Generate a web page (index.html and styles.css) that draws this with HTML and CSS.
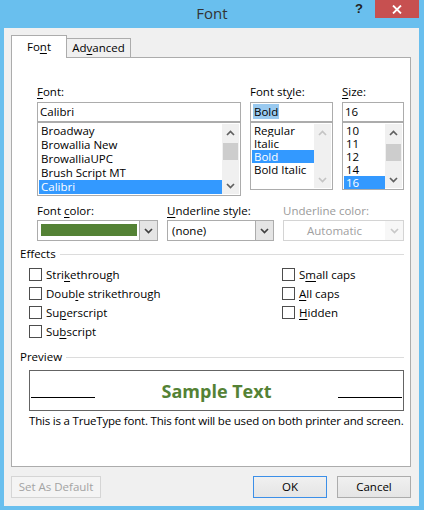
FILE: index.html
```html
<!DOCTYPE html>
<html>
<head>
<meta charset="utf-8">
<title>Font</title>
<link rel="stylesheet" href="styles.css">
</head>
<body>
<div class="window">
  <div class="titlebar">
    <span class="title">Font</span>
    <div class="controls">
      <span class="help">?</span>
      <span class="close"><svg width="10" height="9" viewBox="0 0 10 9"><path d="M1 0.5 L9 8.5 M9 0.5 L1 8.5" stroke="#fff" stroke-width="1.8" fill="none"/></svg></span>
    </div>
  </div>
  <div class="client">
    <div class="tabs">
      <div class="tab active">Fo<u>n</u>t</div>
      <div class="tab">Ad<u>v</u>anced</div>
    </div>
    <div class="panel">
      <div class="fontgrid">
        <div class="field">
          <div class="label"><u>F</u>ont:</div>
          <div class="input">Calibri</div>
          <div class="list list-font">
            <div class="items">
              <div class="item">Broadway</div>
              <div class="item">Browallia New</div>
              <div class="item">BrowalliaUPC</div>
              <div class="item">Brush Script MT</div>
              <div class="item sel">Calibri</div>
            </div>
            <div class="sbar">
              <div class="sbtn"><svg width="9" height="6" viewBox="0 0 9 6"><path d="M1 5 L4.5 1.5 L8 5" fill="none" stroke="#606060" stroke-width="1.7"/></svg></div>
              <div class="thumb t1"></div>
              <div class="sfill"></div>
              <div class="sbtn"><svg width="9" height="6" viewBox="0 0 9 6"><path d="M1 1 L4.5 4.5 L8 1" fill="none" stroke="#606060" stroke-width="1.7"/></svg></div>
            </div>
          </div>
        </div>
        <div class="field">
          <div class="label">Font st<u>y</u>le:</div>
          <div class="input"><span class="insel">Bold</span></div>
          <div class="list list-small">
            <div class="items small">
              <div class="item">Regular</div>
              <div class="item">Italic</div>
              <div class="item sel">Bold</div>
              <div class="item">Bold Italic</div>
            </div>
            <div class="sbar">
              <div class="sbtn"><svg width="9" height="6" viewBox="0 0 9 6"><path d="M1 5 L4.5 1.5 L8 5" fill="none" stroke="#c4c4c4" stroke-width="1.7"/></svg></div>
              <div class="sfill"></div>
              <div class="sbtn"><svg width="9" height="6" viewBox="0 0 9 6"><path d="M1 1 L4.5 4.5 L8 1" fill="none" stroke="#c4c4c4" stroke-width="1.7"/></svg></div>
            </div>
          </div>
        </div>
        <div class="field">
          <div class="label"><u>S</u>ize:</div>
          <div class="input">16</div>
          <div class="list list-small">
            <div class="items small">
              <div class="item">10</div>
              <div class="item">11</div>
              <div class="item">12</div>
              <div class="item">14</div>
              <div class="item sel">16</div>
            </div>
            <div class="sbar">
              <div class="sbtn"><svg width="9" height="6" viewBox="0 0 9 6"><path d="M1 5 L4.5 1.5 L8 5" fill="none" stroke="#606060" stroke-width="1.7"/></svg></div>
              <div class="thumb t2"></div>
              <div class="sfill"></div>
              <div class="sbtn"><svg width="9" height="6" viewBox="0 0 9 6"><path d="M1 1 L4.5 4.5 L8 1" fill="none" stroke="#606060" stroke-width="1.7"/></svg></div>
            </div>
          </div>
        </div>
      </div>

      <div class="colorrow">
        <div class="field">
          <div class="label">Font <u>c</u>olor:</div>
          <div class="combo">
            <div class="cval swatchwrap"><div class="swatch"></div></div>
            <div class="drop"><svg width="9" height="6" viewBox="0 0 9 6"><path d="M1 1 L4.5 4.5 L8 1" fill="none" stroke="#404040" stroke-width="1.7"/></svg></div>
          </div>
        </div>
        <div class="field">
          <div class="label"><u>U</u>nderline style:</div>
          <div class="combo">
            <div class="cval">(none)</div>
            <div class="drop"><svg width="9" height="6" viewBox="0 0 9 6"><path d="M1 1 L4.5 4.5 L8 1" fill="none" stroke="#404040" stroke-width="1.7"/></svg></div>
          </div>
        </div>
        <div class="field">
          <div class="label disabled">Underline color:</div>
          <div class="combo off">
            <div class="cval center">Automatic</div>
            <div class="drop"><svg width="9" height="6" viewBox="0 0 9 6"><path d="M1 1 L4.5 4.5 L8 1" fill="none" stroke="#c8c8c8" stroke-width="1.7"/></svg></div>
          </div>
        </div>
      </div>

      <div class="group g-effects"><span>Effects</span><div class="gline"></div></div>
      <div class="effects">
        <div class="ecol">
          <div class="check"><span class="box"></span><span>Stri<u>k</u>ethrough</span></div>
          <div class="check"><span class="box"></span><span>Doub<u>l</u>e strikethrough</span></div>
          <div class="check"><span class="box"></span><span>Su<u>p</u>erscript</span></div>
          <div class="check"><span class="box"></span><span>Su<u>b</u>script</span></div>
        </div>
        <div class="ecol">
          <div class="check"><span class="box"></span><span>S<u>m</u>all caps</span></div>
          <div class="check"><span class="box"></span><span><u>A</u>ll caps</span></div>
          <div class="check"><span class="box"></span><span><u>H</u>idden</span></div>
        </div>
      </div>

      <div class="group g-preview"><span>Preview</span><div class="gline"></div></div>
      <div class="preview">
        <div class="pline"></div>
        <div class="sample">Sample Text</div>
        <div class="pline"></div>
      </div>
      <div class="desc">This is a TrueType font. This font will be used on both printer and screen.</div>
    </div>

    <div class="buttons">
      <div class="btn btn-wide disabled-btn">Set As Default</div>
      <div class="btn btn-ok">OK</div>
      <div class="btn">Cancel</div>
    </div>
  </div>
</div>
</body>
</html>
```

FILE: styles.css
```css
* { box-sizing: border-box; }
html, body { margin: 0; padding: 0; }
body {
  font-family: "Open Sans", "Noto Sans", sans-serif;
  font-size: 11.5px;
  color: #000;
  background: #69bfee;
}
u { text-decoration: underline; text-underline-offset: 2px; text-decoration-thickness: 1px; }

.window {
  width: 424px;
  height: 510px;
  background: #69bfee;
  display: flex;
  flex-direction: column;
}

.titlebar {
  height: 28px;
  flex: none;
  display: grid;
  grid-template-columns: 1fr auto 1fr;
}
.title {
  grid-column: 2;
  font-size: 15px;
  line-height: 26px;
  color: #333;
}
.controls {
  grid-column: 3;
  justify-self: end;
  display: flex;
  align-items: flex-start;
  margin-right: 5px;
}
.help {
  font-family: "Liberation Sans", sans-serif;
  font-weight: bold;
  font-size: 13px;
  line-height: 16px;
  margin-top: 1px;
  margin-right: 12px;
  color: #222;
}
.close {
  width: 44px;
  height: 18px;
  background: #c75050;
  display: flex;
  align-items: center;
  justify-content: center;
}

.client {
  flex: 1;
  margin: 0 5px 4px 4px;
  background: #f0f0f0;
  padding: 7px 8px 8px 7px;
  display: flex;
  flex-direction: column;
}

.tabs {
  height: 22px;
  display: flex;
  align-items: flex-start;
  flex: none;
}
.tab {
  height: 19px;
  margin-top: 3px;
  width: 64px;
  border: 1px solid #acacac;
  border-left: none;
  border-bottom: none;
  background: #f0f0f0;
  text-align: center;
  line-height: 18px;
}
.tab.active {
  position: relative;
  z-index: 1;
  margin-top: 0;
  height: 23px;
  width: 56px;
  border-left: 1px solid #acacac;
  background: #fff;
  line-height: 21px;
}

.panel {
  height: 410px;
  flex: none;
  background: #fff;
  border: 1px solid #acacac;
  padding: 26px 6px 0 8px;
}

.label { line-height: 16px; margin-bottom: 2px; white-space: nowrap; }
.label.disabled { color: #9a9a9a; }
.field { display: flex; flex-direction: column; }

.fontgrid {
  margin-left: 17px;
  display: grid;
  grid-template-columns: 204px 83px 62px;
  column-gap: 9px;
}
.input {
  height: 20px;
  border: 1px solid #acacac;
  padding-left: 2px;
  line-height: 18px;
  white-space: nowrap;
}
.insel { background: #99c9ef; padding: 0 1px; }
.list {
  border: 1px solid #acacac;
  padding: 1px;
  display: flex;
}
.list-font { height: 74px; }
.list-small { height: 68px; }
.items { flex: 1; min-width: 0; }
.item {
  height: 14px;
  line-height: 14px;
  padding-left: 2px;
  white-space: nowrap;
  overflow: hidden;
}
.items.small .item { height: 13px; line-height: 13px; }
.item.sel { background: #3399ff; color: #fff; }

.sbar {
  width: 17px;
  background: #f0f0f0;
  display: flex;
  flex-direction: column;
  flex: none;
}
.sbtn {
  height: 17px;
  flex: none;
  display: flex;
  align-items: center;
  justify-content: center;
}
.sfill { flex: 1; }
.thumb { height: 17px; margin: 2px 1px 0; background: #cdcdcd; flex: none; }
.thumb.t2 { margin-top: 3px; }

.colorrow {
  margin-left: 17px;
  margin-top: 7px;
  display: grid;
  grid-template-columns: 121px 107px 121px;
  column-gap: 9px;
}
.colorrow .label { margin-bottom: 1px; }
.combo {
  height: 21px;
  border: 1px solid #acacac;
  background: #fff;
  display: flex;
}
.cval {
  flex: 1;
  line-height: 19px;
  padding-left: 4px;
  white-space: nowrap;
}
.cval.center { text-align: center; padding-left: 0; color: #a0a0a0; }
.swatchwrap { padding: 3px 2px 4px 3px; }
.swatch { height: 12px; background: #548235; }
.drop {
  width: 18px;
  border-left: 1px solid #acacac;
  background: #e5e5e5;
  display: flex;
  align-items: center;
  justify-content: center;
}
.combo.off { border-color: #d4d4d4; }
.combo.off .drop { border-left: none; background: #f7f7f7; }

.group {
  display: flex;
  align-items: center;
  gap: 4px;
  line-height: 16px;
}
.gline { flex: 1; height: 1px; background: #dcdcdc; }
.g-effects { margin-top: 5px; }
.g-preview { margin-top: 8px; }

.effects {
  margin-top: 3px;
  padding-left: 9px;
  display: grid;
  grid-template-columns: 253px 1fr;
}
.check {
  height: 19px;
  display: flex;
  align-items: center;
  gap: 4px;
  white-space: nowrap;
}
.box {
  width: 13px;
  height: 13px;
  border: 1px solid #4d4d4d;
  background: #fff;
  flex: none;
}

.preview {
  margin-top: 5px;
  margin-left: 9px;
  height: 41px;
  border: 1px solid #646464;
  padding: 0 1px;
  display: grid;
  grid-template-columns: 64px 1fr 64px;
}
.pline {
  align-self: end;
  height: 1px;
  background: #000;
  margin-bottom: 12px;
}
.sample {
  align-self: center;
  text-align: center;
  font-family: "Open Sans", "Noto Sans", sans-serif;
  font-weight: 700;
  font-size: 18px;
  line-height: 24px;
  color: #548235;
}
.desc {
  margin-top: 2px;
  margin-left: 9px;
  line-height: 16px;
  letter-spacing: -0.2px;
  white-space: nowrap;
}

.buttons {
  margin-top: 9px;
  height: 22px;
  display: flex;
  gap: 10px;
  flex: none;
}
.btn {
  width: 74px;
  height: 22px;
  border: 1px solid #acacac;
  background: linear-gradient(#f0f0f0, #e5e5e5);
  text-align: center;
  line-height: 20px;
}
.btn-wide { width: 90px; margin-right: auto; }
.disabled-btn { border-color: #d5d5d5; background: #f4f4f4; color: #a3a3a3; }
.btn-ok { border-color: #3c8fe8; }
```
